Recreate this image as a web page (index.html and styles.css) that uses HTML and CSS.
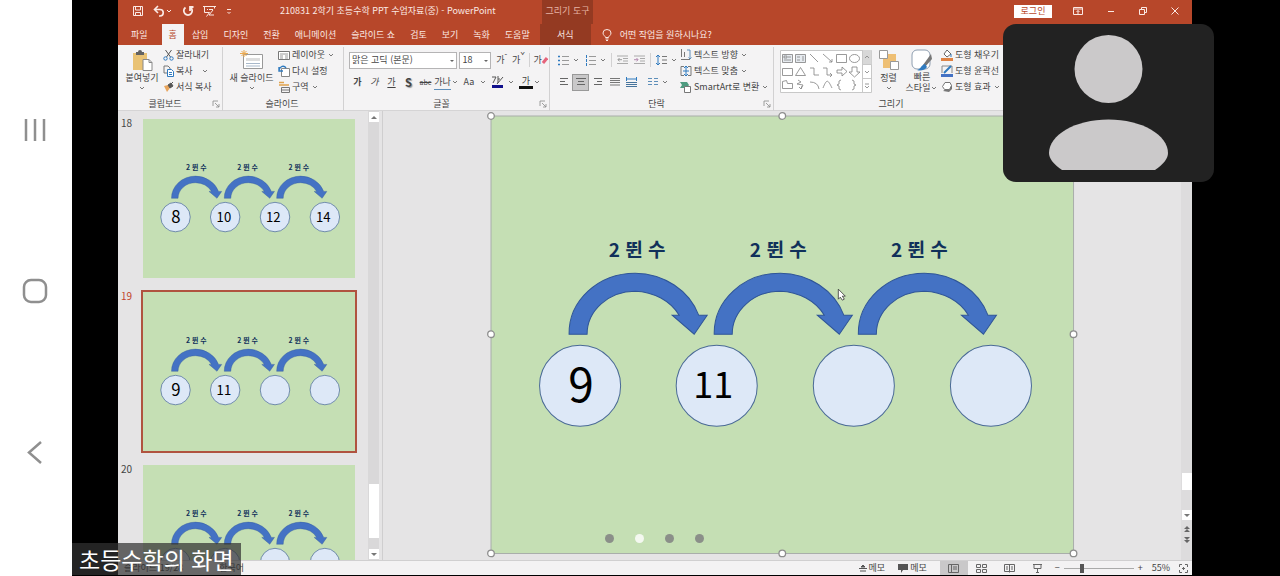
FILE: index.html
```html
<!DOCTYPE html>
<html lang="ko">
<head>
<meta charset="utf-8">
<meta name="viewport" content="width=device-width, initial-scale=1">
<title>PowerPoint</title>
<link rel="stylesheet" href="styles.css">
</head>
<body>
<svg class="defs" aria-hidden="true">
  <symbol id="arrow" viewBox="0 0 140 64" overflow="visible"><path d="M1 62A66 60 0 0 1 67 1A68 62 0 0 1 130.500 43H139L126 62L104 43H111A52 45 0 0 0 67 19A48 43 0 0 0 19 62Z" fill="#4472c4" stroke="#2f5597"/></symbol>
  <symbol id="chev" viewBox="0 0 8 8"><path d="M2 3l2 2 2-2" fill="none" stroke="#777"/></symbol>
  <symbol id="launch" viewBox="0 0 8 8"><path d="M1 6V1h5M3 3l4 4M7 4v3H4" fill="none" stroke="#888" stroke-width=".8"/></symbol>
  <g id="hops">
    <use href="#arrow" x="77" y="156" width="140" height="64"/>
    <use href="#arrow" x="222" y="156" width="140" height="64"/>
    <use href="#arrow" x="366" y="156" width="140" height="64"/>
    <g class="rings"><circle cx="89" cy="269.500" r="40.500"/><circle cx="225.500" cy="269.500" r="40.500"/><circle cx="362.500" cy="269.500" r="40.500"/><circle cx="499.500" cy="269.500" r="40.500"/></g>
  </g>
</svg>

<nav class="sysnav" aria-label="시스템 탐색">
  <button aria-label="최근 앱"><svg width="26" height="26" viewBox="0 0 26 26"><path d="M4 2v22M13 2v22M22 2v22"/></svg></button>
  <button aria-label="홈"><svg width="26" height="26" viewBox="0 0 26 26"><rect x="2" y="2" width="22" height="22" rx="7"/></svg></button>
  <button aria-label="뒤로"><svg width="26" height="26" viewBox="0 0 26 26"><path d="M19 3L7 13.500 19 24"/></svg></button>
</nav>

<main class="share">
<div class="app">
  <header class="head">
    <div class="titlebar">
      <div class="quick">
        <button aria-label="저장"><svg width="12" height="12" viewBox="0 0 12 12"><path d="M1.500 1.500h9v9h-9zM3.500 1.500v3.500h5V1.500M3.500 10.500v-3h5v3"/></svg></button>
        <button aria-label="실행 취소"><svg width="12" height="12" viewBox="0 0 12 12"><path d="M5 1L1.500 4.500 5 8M2 4.500h5a3 3 0 0 1 0 6.500H6" stroke-width="1.600"/></svg><svg width="8" height="8" viewBox="0 0 8 8"><path d="M2 3l2 2 2-2"/></svg></button>
        <button aria-label="다시 실행"><svg width="12" height="12" viewBox="0 0 12 12"><path d="M3.500 2.500a4.200 4.200 0 1 0 5 0M8 6V2h3.500" stroke-width="1.800"/></svg></button>
        <button aria-label="슬라이드 쇼"><svg width="13" height="12" viewBox="0 0 13 12"><path d="M0 1.500h13M1.500 1.500v6h5M11.500 1.500v2M6.500 7.500l-3 4M6 4.500h4M10 5l-4 5h5M4 4.500h1"/></svg></button>
        <button aria-label="사용자 지정"><svg width="8" height="8" viewBox="0 0 8 8"><path d="M2 2.500h4M2.500 5l1.500 1.500L5.500 5"/></svg></button>
      </div>
      <h1 class="doc">210831 2학기 초등수학 PPT 수업자료(중) - PowerPoint</h1>
      <span class="ctx">그리기 도구</span>
      <div class="win">
        <button class="login">로그인</button>
        <button aria-label="리본 표시 옵션"><svg width="10" height="8" viewBox="0 0 10 8"><path d="M.5.500h9v7h-9zM.5 2h9M5 7V3.500M3.500 5L5 3.500 6.500 5"/></svg></button>
        <button aria-label="최소화"><svg width="8" height="8" viewBox="0 0 8 8"><path d="M1 4.500h6"/></svg></button>
        <button aria-label="이전 크기로"><svg width="8" height="8" viewBox="0 0 8 8"><path d="M.5 2.500h5v5h-5zM2.500 2.500v-2h5v5h-2"/></svg></button>
        <button aria-label="닫기"><svg width="8" height="8" viewBox="0 0 8 8"><path d="M.5.500l7 7M7.500.500l-7 7"/></svg></button>
      </div>
    </div>
    <div class="tabs">
      <button class="file">파일</button><button class="on">홈</button><button>삽입</button><button>디자인</button><button>전환</button><button>애니메이션</button><button>슬라이드 쇼</button><button>검토</button><button>보기</button><button>녹화</button><button>도움말</button><button class="format">서식</button>
      <button class="tell"><svg width="10" height="12" viewBox="0 0 10 12"><path d="M3.500 8.500C3.500 7 1 6.500 1 4a4 3.500 0 0 1 8 0C9 6.500 6.500 7 6.500 8.500zM3.500 10h3M4 11.500h2"/></svg>어떤 작업을 원하시나요?</button>
    </div>
  </header>

  <section class="ribbon" aria-label="홈 리본">
    <div class="group">
      <div class="body clip">
        <button class="big"><svg width="22" height="22" viewBox="0 0 22 22"><path d="M2 4h14v17H2z" fill="#e9c274"/><path d="M5 3h2a2 2 0 0 1 4 0h2v3H5z" fill="#626262"/><path d="M12 10.500h6l3 3v8h-9z" fill="#fff" stroke="#888"/><path d="M18 10.500v3h3" fill="none" stroke="#888"/></svg><span>붙여넣기</span><svg width="8" height="8"><use href="#chev"/></svg></button>
        <div class="stack">
          <button><svg width="11" height="12" viewBox="0 0 11 12"><path d="M2.500 1l5 7M8.500 1l-5 7" stroke="#555"/><circle cx="2.500" cy="9.500" r="1.700" stroke="#2f7abf"/><circle cx="8.500" cy="9.500" r="1.700" stroke="#2f7abf"/></svg>잘라내기</button>
          <button><svg width="11" height="12" viewBox="0 0 11 12"><path d="M4 8H1V1h4l2 2v1" stroke="#777"/><path d="M4.500 4.500h4l2 2v5h-6z" fill="#fff" stroke="#2f7abf"/><path d="M6 7.500h3M6 9.500h3" stroke="#2f7abf"/></svg>복사<svg class="far" width="8" height="8"><use href="#chev"/></svg></button>
          <button><svg width="11" height="12" viewBox="0 0 11 12"><path d="M1 5l4-1 2 3-3 4z" fill="#e8a55d"/><path d="M5 4l2 3 3-2-2-3zM8 3l2-2" fill="#555" stroke="#555"/></svg>서식 복사</button>
        </div>
      </div>
      <footer><span>클립보드</span><svg width="8" height="8"><use href="#launch"/></svg></footer>
    </div>

    <div class="group">
      <div class="body slides">
        <button class="big"><svg width="24" height="22" viewBox="0 0 24 22"><path d="M3.500 5.500h19v14h-19z" fill="#fff" stroke="#999"/><path d="M6 9h14v3H6z" fill="#ddd"/><path d="M6 14.500h14M6 17h14" stroke="#a8b8ca"/><path d="M4 1v7M0 4.500h8M1.500 2l5 5M6.500 2l-5 5" stroke="#eba94f"/></svg><span>새 슬라이드</span><svg width="8" height="8"><use href="#chev"/></svg></button>
        <div class="stack">
          <button><svg width="12" height="12" viewBox="0 0 12 12"><path d="M.5 2.500h11v8H.5z" fill="#fff" stroke="#777"/><path d="M2 5h8M2 7h3M7 7h3M2 9h3M7 9h3" stroke="#999"/></svg>레이아웃<svg width="8" height="8"><use href="#chev"/></svg></button>
          <button><svg width="12" height="12" viewBox="0 0 12 12"><path d="M3.500 3.500h8v8h-8z" fill="#fff" stroke="#888"/><path d="M1 2v4h4M1 5c1-4 5-5 7-2" stroke="#2f7abf" stroke-width="1.400"/></svg>다시 설정</button>
          <button><svg width="12" height="12" viewBox="0 0 12 12"><path d="M1 1.500h5M1 4h10" stroke="#e0a24b" stroke-width="1.500"/><path d="M3.500 6.500h8v5h-8zM3.500 9h8" stroke="#777"/></svg>구역<svg width="8" height="8"><use href="#chev"/></svg></button>
        </div>
      </div>
      <footer><span>슬라이드</span></footer>
    </div>

    <div class="group">
      <div class="body rows">
        <div class="row">
          <span class="combo name"><select aria-label="글꼴"><option>맑은 고딕 (본문)</option></select></span>
          <span class="combo size"><select aria-label="글꼴 크기"><option>18</option></select></span>
          <button class="cell">가<sup>ˆ</sup></button><button class="cell">가<sup>ˇ</sup></button><i class="bar"></i>
          <button class="cell" aria-label="서식 지우기">가<svg width="6" height="10" viewBox="0 0 6 10"><path d="M1 8l4-5" stroke="#e5637b" stroke-width="3"/></svg></button>
        </div>
        <div class="row">
          <button class="cell"><b>가</b></button><button class="cell"><em>가</em></button><button class="cell"><u>가</u></button><button class="cell"><b class="shadow">S</b></button><button class="cell"><s>abc</s></button><button class="cell spaced">가나</button><svg width="8" height="8"><use href="#chev"/></svg>
          <button class="cell case">Aa</button><svg width="8" height="8"><use href="#chev"/></svg>
          <button class="cell mark" aria-label="강조 색"><svg width="13" height="14" viewBox="0 0 13 14"><path d="M1 2h4L2 8M7 1v7M7 4h2M6 9l6-7" stroke="#555"/><path d="M1 11.500h11" stroke="#10108c" stroke-width="3"/></svg></button><svg width="8" height="8"><use href="#chev"/></svg>
          <button class="cell ink">가</button><svg width="8" height="8"><use href="#chev"/></svg>
        </div>
      </div>
      <footer><span>글꼴</span><svg width="8" height="8"><use href="#launch"/></svg></footer>
    </div>

    <div class="group">
      <div class="body para">
        <div class="rows">
          <div class="row">
            <button class="cell" aria-label="글머리 기호"><svg width="11" height="11" viewBox="0 0 11 11"><path d="M0 1.500h2M0 5.500h2M0 9.500h2" stroke="#2f7abf" stroke-width="1.500"/><path d="M4 1.500h7M4 5.500h7M4 9.500h7" stroke="#999"/></svg></button><svg class="wide" width="8" height="8"><use href="#chev"/></svg>
            <button class="cell" aria-label="번호 매기기"><svg width="11" height="11" viewBox="0 0 11 11"><path d="M1.500 0v3M1.500 4v3M1.500 8v3" stroke="#2f7abf"/><path d="M4 1.500h7M4 5.500h7M4 9.500h7" stroke="#999"/></svg></button><svg class="wide" width="8" height="8"><use href="#chev"/></svg><i class="bar"></i>
            <button class="cell" aria-label="내어쓰기"><svg width="11" height="10" viewBox="0 0 11 10"><path d="M0 1h11M6 3.500h5M6 6h5M0 8.500h11" stroke="#aaa"/><path d="M5 4.700H1M2.500 3L1 4.700l1.500 1.700" stroke="#999"/></svg></button>
            <button class="cell" aria-label="들여쓰기"><svg width="11" height="10" viewBox="0 0 11 10"><path d="M0 1h11M6 3.500h5M6 6h5M0 8.500h11" stroke="#aaa"/><path d="M0 4.700h4M2.500 3L4 4.700 2.500 6.400" stroke="#b48bb0"/></svg></button><i class="bar"></i>
            <button class="cell" aria-label="줄 간격"><svg width="11" height="12" viewBox="0 0 11 12"><path d="M2 1v10M0 3l2-2 2 2M0 9l2 2 2-2" stroke="#2f7abf"/><path d="M6 2.500h5M6 6h5M6 9.500h5" stroke="#777"/></svg></button><svg width="8" height="8"><use href="#chev"/></svg>
          </div>
          <div class="row">
            <button class="cell" aria-label="왼쪽"><svg width="10" height="8" viewBox="0 0 10 8"><path d="M1 .500h8M1 3.500h5M1 6.500h8" stroke="#666"/></svg></button>
            <button class="cell picked" aria-label="가운데"><svg width="10" height="8" viewBox="0 0 10 8"><path d="M0 .500h10M2 3.500h6M1 6.500h8" stroke="#666"/></svg></button>
            <button class="cell" aria-label="오른쪽"><svg width="10" height="8" viewBox="0 0 10 8"><path d="M1 .500h8M4 3.500h5M1 6.500h8" stroke="#666"/></svg></button>
            <button class="cell" aria-label="양쪽"><svg width="10" height="8" viewBox="0 0 10 8"><path d="M0 .500h10M0 2.500h10M0 4.500h10M0 7h10" stroke="#777"/></svg></button>
            <button class="cell" aria-label="균등"><svg width="11" height="11" viewBox="0 0 11 11"><path d="M.5 0v4M10.500 0v4M1 2h9" stroke="#2f7abf"/><path d="M0 5.500h11M0 7.500h11M0 9.500h11" stroke="#47749c"/></svg></button>
            <button class="cell cols" aria-label="열"><svg width="10" height="8" viewBox="0 0 10 8"><path d="M0 .500h4M6 .500h4M0 3.500h4M6 3.500h4M0 6.500h4M6 6.500h4" stroke="#5e8fba"/></svg></button><svg width="8" height="8"><use href="#chev"/></svg>
          </div>
        </div>
        <div class="stack">
          <button><svg width="12" height="12" viewBox="0 0 12 12"><path d="M1.500 0v8M4.500 3v5M1 10.500h9" stroke="#777"/><path d="M7 1h3v9M8.500 8.500L10 10l1.500-1.500" stroke="#5e8fba"/></svg>텍스트 방향<svg width="8" height="8"><use href="#chev"/></svg></button>
          <button><svg width="12" height="12" viewBox="0 0 12 12"><path d="M4 1.500H1v9h3M8 1.500h3v9H8" stroke="#777"/><path d="M6 1v10M4 3l2-2 2 2M4 9l2 2 2-2M3 6h6" stroke="#2f7abf"/></svg>텍스트 맞춤<svg width="8" height="8"><use href="#chev"/></svg></button>
          <button><svg width="12" height="12" viewBox="0 0 12 12"><path d="M0 1h7l2 3-2 3H0l2-3z" fill="#4e9b80"/><path d="M4.500 5.500h6v6h-6z" fill="#fff" stroke="#777"/></svg>SmartArt로 변환<svg width="8" height="8"><use href="#chev"/></svg></button>
        </div>
      </div>
      <footer><span>단락</span><svg width="8" height="8"><use href="#launch"/></svg></footer>
    </div>

    <div class="group last">
      <div class="body draw">
        <svg class="gallery" width="92" height="43" viewBox="0 0 92 43" role="img" aria-label="도형">
          <path d="M.5.500h91v42H.5z" fill="#fff" stroke="#c8c8c8"/><path d="M82.500 0h9v15h-9z" fill="#d8d8d8"/><path d="M82.500 0v43M82.500 14.500h9M82.500 28.500h9" stroke="#c8c8c8"/>
          <path d="M2.500 4.500h10v8h-10zM15.500 4.500h10v8h-10z" fill="#e6ebf0"/>
          <g stroke="#808080" stroke-width=".8"><path d="M2.500 4.500h10v8h-10zM4 6h3v2H4zM8 7h3M4 10h7M15.500 4.500h10v8h-10zM17 7h3M17 10h3M23 6v5M30 4l8 8M43 4l9 8M49 12h3V9M56.500 4.500h10v8h-10z"/><ellipse cx="74.500" cy="8.500" rx="5" ry="4"/><path d="M2.500 18.500h10v7h-10zM15.500 25.500l5-8 5 8zM30 18h4v7h5M43 18h4v7h5M50 23l2 2-2 2M57 20h5v-3l5 4.500-5 4.500v-3h-5zM72 17h5v5h3l-5.500 5L69 22h3zM2.500 31.500l4-1 1 3h5v5h-10zM18 30l3 2-4 2 6 1-2 4M22 36l-1 3-2-2M30 32q8 0 9 7M43 38c4-10 5-8 9 0M61 30q-3 0-2 4l-2 1 2 1q-1 4 2 4M72 30q3 0 2 4l2 1-2 1q1 4-2 4M85 8l2-2 2 2M85 21l2 2 2-2M85 34h4M85 36l2 2 2-2"/></g>
        </svg>
        <button class="big arrange"><svg width="20" height="22" viewBox="0 0 20 22"><path d="M8 5h9v8H8zM4 10h9v9H4z" fill="#eebf74"/><path d="M.5 1.500h8v8h-8zM11.500 12.500h8v8h-8z" fill="#fff" stroke="#999"/></svg><span>정렬</span><svg width="8" height="8"><use href="#chev"/></svg></button>
        <button class="big quickstyle"><svg width="22" height="22" viewBox="0 0 22 22"><rect x="1" y="1" width="18" height="19" rx="5" fill="#fff" stroke="#8e9eb0"/><path d="M20 5l1 5-7 8-2-2z" fill="#777"/><path d="M14 15l2 3c-3 4-7 4-10 3 4-1 4-5 8-6z" fill="#2f7abf"/></svg><span>빠른</span><span class="tail">스타일<svg width="8" height="8"><use href="#chev"/></svg></span></button>
        <div class="stack">
          <button><svg width="12" height="12" viewBox="0 0 12 12"><path d="M3 5l3-4 4 4-4 3z" fill="#fff" stroke="#666"/><path d="M10 5v3" stroke="#2f7abf"/><path d="M0 10.500h12" stroke="#df8244" stroke-width="3"/></svg>도형 채우기</button>
          <button><svg width="12" height="12" viewBox="0 0 12 12"><path d="M1 8V1h10v7" stroke="#888"/><path d="M3 8l7-7" stroke="#2f7abf" stroke-width="2"/><path d="M0 10.500h12" stroke="#4472c4" stroke-width="3"/></svg>도형 윤곽선</button>
          <button><svg width="12" height="12" viewBox="0 0 12 12"><path d="M2 10l6 1 3-3V4z" fill="#777"/><path d="M4 1.500h5l1.500 3-2 4h-5l-2-3z" fill="#fff" stroke="#777"/></svg>도형 효과<svg width="8" height="8"><use href="#chev"/></svg></button>
        </div>
      </div>
      <footer><span>그리기</span></footer>
    </div>
  </section>

  <div class="work">
    <aside class="thumbs" aria-label="슬라이드 목록">
      <ol>
        <li><span>18</span><svg class="slide" viewBox="0 0 582 437"><use href="#hops"/><g class="label"><text x="146" y="141">2 뛴 수</text><text x="287" y="141">2 뛴 수</text><text x="428" y="141">2 뛴 수</text></g><g class="num"><text class="one" x="90" y="286">8</text><text x="222" y="282">10</text><text x="358" y="282">12</text><text x="495" y="282">14</text></g></svg></li>
        <li class="current"><span>19</span><svg class="slide" viewBox="0 0 582 437"><use href="#hops"/><g class="label"><text x="146" y="141">2 뛴 수</text><text x="287" y="141">2 뛴 수</text><text x="428" y="141">2 뛴 수</text></g><g class="num"><text class="one" x="90" y="286">9</text><text x="222" y="282">11</text></g></svg></li>
        <li><span>20</span><svg class="slide" viewBox="0 0 582 437"><use href="#hops"/><g class="label"><text x="146" y="141">2 뛴 수</text><text x="287" y="141">2 뛴 수</text><text x="428" y="141">2 뛴 수</text></g></svg></li>
      </ol>
      <div class="scroll"><i class="arrow-up"></i><i class="thumb"></i><i class="arrow-down"></i></div>
    </aside>
    <section class="editor">
      <svg class="slide" viewBox="0 0 582 437"><use href="#hops"/><g class="label"><text x="146" y="141">2 뛴 수</text><text x="287" y="141">2 뛴 수</text><text x="428" y="141">2 뛴 수</text></g><g class="num"><text class="one" x="90" y="286">9</text><text x="222" y="282">11</text></g>
        <path d="M0 0h582v437H0z" fill="none" stroke="#a9aeaa"/>
        <g fill="#fff" stroke="#8d8d8d" stroke-width="1.300"><circle r="3.300"/><circle cx="291" r="3.300"/><circle cy="218" r="3.300"/><circle cx="582" cy="218" r="3.300"/><circle cy="437" r="3.300"/><circle cx="291" cy="437" r="3.300"/><circle cx="582" cy="437" r="3.300"/></g>
        <path d="M347 173v10l2-2 2 3 2-1-2-3h3z" fill="#fff" stroke="#333" stroke-width=".8"/>
      </svg>
    </section>
    <div class="scroll main"><i class="thumb"></i><i class="arrow-down"></i><svg width="8" height="22" viewBox="0 0 8 22"><path d="M1 6l3-3 3 3zM1 9l3-3 3 3zM1 14h6l-3 3zM1 17h6l-3 3z" fill="#666"/></svg></div>
  </div>

  <footer class="status">
    <span class="info">슬라이드 19/28</span><span class="lang">한국어</span>
    <button class="memo"><svg width="8" height="8" viewBox="0 0 8 8"><path d="M4 1l2 2H2zM0 4.500h8M1 7h6" fill="#555" stroke="#555"/></svg>메모</button>
    <button class="memo"><svg width="10" height="9" viewBox="0 0 10 9"><path d="M0 0h10v6H5L3 9V6H0z" fill="#555"/></svg>메모</button>
    <div class="views">
      <button class="on" aria-label="기본"><svg width="11" height="9" viewBox="0 0 11 9"><path d="M.5.500h10v8H.500zM3.500.500v8M5 3h4M5 5h4"/></svg></button>
      <button aria-label="여러 슬라이드"><svg width="11" height="9" viewBox="0 0 11 9"><path d="M.5.500h4v3h-4zM6.500.500h4v3h-4zM.5 5.500h4v3h-4zM6.500 5.500h4v3h-4z"/></svg></button>
      <button aria-label="읽기용"><svg width="11" height="9" viewBox="0 0 11 9"><path d="M.5.500h10v7H.500zM5.500.500v8M2 3h2M2 5h2M7 3h2M7 5h2"/></svg></button>
      <button aria-label="슬라이드 쇼 보기"><svg width="11" height="9" viewBox="0 0 11 9"><path d="M1 .500h9M2 1v3.500h7V1M5.500 5v3.500M4 8.500h3"/></svg></button>
    </div>
    <button aria-label="축소">−</button><input type="range" aria-label="확대/축소" min="0" max="100" value="25"><button aria-label="확대">+</button>
    <span class="pct">55%</span>
    <button class="fit" aria-label="창에 맞춤"><svg width="9" height="9" viewBox="0 0 9 9"><path d="M.5 3V.500H3M6 .500h2.500V3M8.500 6v2.500H6M3 8.500H.5V6M3 4.500h3M4.500 3v3"/></svg></button>
  </footer>
</div>

<div class="video" role="img" aria-label="참가자"><svg viewBox="0 0 211 158"><circle cx="105.500" cy="45" r="34" fill="#cbc9ca"/><path d="M59 146C50 140 46 134 46 129C46 111 72 95.500 105.500 95.500S165 111 165 129C165 134 161 140 152 146Z" fill="#cbc9ca"/></svg></div>
<div class="pager"><i></i><i class="on"></i><i></i><i></i></div>
<p class="caption">초등수학의 화면</p>
</main>
</body>
</html>
```

FILE: styles.css
```css
* { box-sizing: border-box; }

body {
  margin: 0;
  height: 100vh;
  display: flex;
  overflow: hidden;
  background: #000;
  color: #444;
  font: 9px/12px "Noto Sans CJK KR", sans-serif;
}

button {
  margin: 0;
  padding: 0;
  border: 0;
  background: none;
  color: inherit;
  font: inherit;
  white-space: nowrap;
}

svg { fill: none; flex: none; }
.defs { position: absolute; width: 0; height: 0; }

/* phone navigation rail */
.sysnav {
  flex: none;
  width: 72px;
  padding-right: 3px;
  background: #fff;
  display: flex;
  flex-direction: column;
  align-items: center;
  justify-content: space-around;
  padding-block: 49px 44px;
}
.sysnav button { height: 26px; }
.sysnav svg { stroke: #8f8f8f; stroke-width: 2.5; }

.share { position: relative; flex: 1; min-width: 0; padding: 0 88px 1px 46px; }
.app { height: 100%; display: flex; flex-direction: column; background: #e5e4e5; overflow: hidden; }

/* title and tabs */
.head { background: #b7472a; color: #fbe9e4; }
.head svg { stroke: #fbe9e4; }
.titlebar { display: flex; align-items: center; height: 24px; padding-bottom: 2px; }
.quick { display: flex; align-items: center; gap: 9px; padding-left: 14px; width: 162px; }
.quick button { display: flex; align-items: center; height: 12px; }
.doc { margin: 0; width: 262px; font-size: 9px; font-weight: 400; white-space: nowrap; }
.ctx { width: 51px; height: 24px; margin: 0 0 -2px; line-height: 22px; text-align: center; white-space: nowrap; background: #943a22; color: #e6b4a5; }
.win { margin-left: auto; display: flex; align-items: center; gap: 24px; padding-right: 13px; }
.win button { display: flex; }
.win .login { width: 38px; height: 13px; margin-right: -3px; justify-content: center; align-items: center; background: #fff; color: #b7472a; }
.tabs { display: flex; height: 21px; }
.tabs button { padding: 0 7px 0 8px; line-height: 20px; }
.tabs .file { padding: 0 14px 0 13px; }
.tabs .on { padding: 0 7px; background: #f4f3f4; color: #b7472a; }
.tabs .format { width: 51px; padding: 0; margin-left: 3px; background: #943a22; }
.tabs .tell { display: flex; align-items: center; gap: 8px; padding-left: 11px; }

/* ribbon */
.ribbon {
  display: grid;
  grid-template-columns: 105px 121px 206px 224px 1fr;
  flex: none;
  height: 66px;
  padding-top: 2px;
  background: #f4f3f4;
  border-bottom: 1px solid #d5d4d5;
}
.group { display: flex; flex-direction: column; border-right: 1px solid #d2d1d2; min-width: 0; }
.last { border: 0; }
.group footer { display: flex; align-items: center; height: 15px; padding-right: 2px; }
.group footer span { flex: 1; text-align: center; }
.last footer { padding-right: 184px; }
.body { display: flex; height: 49px; }
.clip { padding-left: 6px; gap: 3px; }
.slides { padding-left: 6px; gap: 4px; }
.stack { display: flex; flex-direction: column; }
.stack button { display: flex; align-items: center; gap: 2px; height: 16px; }
.stack .far { margin-left: 6px; }
.big { display: flex; flex-direction: column; align-items: center; width: 36px; padding-top: 2px; }
.slides .big { width: 45px; }
.big span { line-height: 13px; }
.rows { display: flex; flex-direction: column; gap: 4px; padding-top: 4px; }
.group > .rows { padding-left: 5px; }
.row { display: flex; align-items: center; height: 18px; }
.cell { position: relative; display: flex; align-items: center; justify-content: center; width: 17px; height: 17px; }
.cell sup { font-size: 8px; line-height: 8px; align-self: flex-start; }
.cell u { text-underline-offset: 2px; }
.cell s { font-size: 7px; }
.shadow { font-size: 11px; text-shadow: 1px 1px 1px #999; }
.spaced { border-bottom: 1px solid #5e8fba; height: 15px; }
.case { width: 20px; }
.mark { width: 20px; }
.ink { width: 14px; height: 14px; margin-left: 4px; border-bottom: 3px solid #111; }
.bar { width: 1px; height: 14px; margin: 0 2px; background: #d2d1d2; }
.combo { position: relative; display: flex; margin-right: 2px; }
.combo::after {
  content: "";
  position: absolute;
  right: 3px;
  top: 8px;
  border: 2px solid transparent;
  border-top-color: #666;
}
.combo select {
  appearance: none;
  width: 100%;
  height: 17px;
  padding: 0 2px;
  border: 1px solid #b5b4b5;
  border-radius: 0;
  background: #fff;
  color: #444;
  font: inherit;
}
.name { width: 109px; }
.size { width: 32px; }
.para { padding-left: 5px; }
.para .rows { width: 125px; }
.wide { margin-right: 2px; }
.picked { background: #c9c8c9; border: 1px solid #999; }
.cols { margin-left: 4px; }
.draw { padding: 3px 0 0 6px; }
.draw .stack, .draw .big { margin-top: -3px; }
.draw .arrange { width: 33px; }
.draw .quickstyle { width: 34px; margin-right: 2px; }
.draw .quickstyle span { line-height: 11px; }
.tail { display: flex; align-items: center; }

/* workspace */
.work { flex: 1; min-height: 0; display: flex; }
.thumbs { flex: none; width: 265px; display: flex; border-right: 1px solid #cfcecf; overflow: hidden; }
.thumbs ol { flex: 1; margin: 0; padding: 8px 0 0 3px; list-style: none; display: flex; flex-direction: column; gap: 14px; }
.thumbs li { display: flex; gap: 8px; font-size: 10px; line-height: 8px; }
.thumbs li span { width: 14px; }
.thumbs .slide { width: 212px; height: 159px; }
.thumbs .slide { --ring: 2px; }
.current { color: #c2452b; }
.current .slide { outline: 2px solid #b0533f; }
.slide { background: #c5dfb4; overflow: visible; }
.rings { fill: #dde8f7; stroke: #4a6a96; stroke-width: var(--ring, 1px); }
.label { fill: #10305a; font: bold 19px "Noto Sans CJK KR", sans-serif; text-anchor: middle; }
.num { fill: #000; font: 36px "Noto Sans CJK KR", sans-serif; text-anchor: middle; }
.num .one { font-size: 46px; }
.editor { flex: 1; min-width: 0; display: flex; align-items: flex-start; justify-content: center; padding-top: 5px; }
.editor .slide { width: 73%; }
.scroll { flex: none; width: 11px; margin-right: 3px; background: #d9d8d9; display: flex; flex-direction: column; align-items: center; padding: 1px 0; }
.scroll i { width: 10px; background: #fff; }
.arrow-up, .arrow-down { height: 10px; display: grid; place-items: center; }
.arrow-up::before, .arrow-down::before { content: ""; border: 3px solid transparent; }
.arrow-up::before { border-bottom-color: #777; border-top: 0; }
.arrow-down::before { border-top-color: #777; border-bottom: 0; }
.thumb { height: 54px; margin-top: auto; margin-bottom: 11px; }
.main { margin-right: 0; padding-bottom: 15px; background: #dddcdd; }
.main .thumb { height: 17px; margin-bottom: 20px; }
.main svg { margin-top: 3px; }

/* status bar */
.status { flex: none; display: flex; align-items: center; height: 15px; padding-right: 4px; background: #f3f2f3; border-top: 1px solid #d0cfd0; }
.status svg { stroke: #666; }
.info { padding-left: 6px; }
.lang { padding-left: 36px; margin-right: auto; }
.memo { display: flex; align-items: center; gap: 2px; margin-right: 13px; }
.memo svg { stroke: none; }
.views { display: flex; margin-right: 3px; align-self: stretch; }
.views button { width: 28px; display: grid; place-items: center; }
.views .on { background: #c9c8c9; }
.status input { appearance: none; width: 70px; height: 11px; margin: 0 4px; background: linear-gradient(#aaa, #aaa) center / 100% 1px no-repeat; }
.status input::-webkit-slider-thumb { appearance: none; width: 4px; height: 9px; background: #555; }
.pct { margin: 0 9px; }
.fit { display: flex; }

/* meeting overlays */
.video { position: absolute; right: 66px; top: 24px; width: 211px; height: 158px; border-radius: 13px; background: #222; overflow: hidden; }
.pager { position: absolute; left: 533px; bottom: 33px; display: flex; gap: 21px; }
.pager i { width: 9px; height: 9px; border-radius: 50%; background: #8b8f89; }
.pager .on { background: #f4f8f0; }
.caption { position: absolute; left: 0; bottom: 1px; margin: 0; padding: 0 7px; font-size: 23px; line-height: 32px; color: #fff; background: rgba(50, 50, 50, .72); }
```
